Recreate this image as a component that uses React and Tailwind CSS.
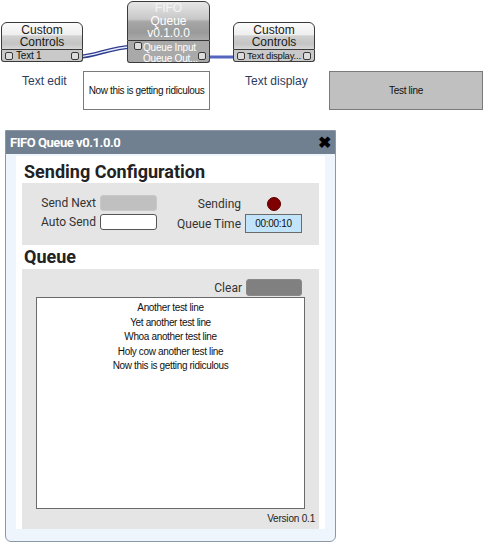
import React from 'react';

const pin = "w-[8px] h-[8px] rounded-[2px] border border-[#3a3a3a] bg-[#dcdcdc] shrink-0";

function Node({ className, head, headClass, children, stripClass }) {
    return (
        <div className={"absolute flex flex-col " + className}>
            <div className={"flex flex-col items-center justify-center border border-[#3a3a3a] rounded-t-[6px] leading-[12.5px] text-[12px] " + headClass}>
                {head}
            </div>
            <div className={"border border-t-0 border-[#3a3a3a] rounded-b-[3px] text-[10px] leading-[11px] whitespace-nowrap overflow-hidden tracking-[-0.2px] " + stripClass}>
                {children}
            </div>
        </div>
    );
}

export default function App() {
    const items = [
        'Another test line',
        'Yet another test line',
        'Whoa another test line',
        'Holy cow another test line',
        'Now this is getting ridiculous',
    ];

    return (
        <div className="w-[483px] h-[542px] bg-white overflow-hidden" style={{ fontFamily: '"Liberation Sans", Arial, sans-serif' }}>
            {/* canvas with nodes */}
            <div className="relative h-[130px]">
                <svg className="absolute left-0 top-0" width="483" height="130">
                    <path d="M78 57 C 96 56, 112 47, 132 47" fill="none" stroke="#2d3c8c" strokeWidth="4" />
                    <path d="M78 57 C 96 56, 112 47, 132 47" fill="none" stroke="#e8ecff" strokeWidth="1.3" />
                    <path d="M206 57 L 240 57" fill="none" stroke="#5565bd" strokeWidth="3" />
                </svg>

                <Node
                    className="left-[1px] top-[22px] w-[82px]"
                    headClass="h-[28px] text-[#1a1a1a] bg-[linear-gradient(#fbfbfb_0%,#eeeeee_45%,#d0d0d0_50%,#c4c4c4_80%,#d6d6d6_100%)]"
                    head={<><span>Custom</span><span>Controls</span></>}
                    stripClass="h-[12px] bg-[#c9c9c9] flex items-center justify-between px-[3px] text-[#111]"
                >
                    <div className="flex items-center gap-[3px]"><div className={pin} /><span>Text 1</span></div>
                    <div className={pin} />
                </Node>

                <Node
                    className="left-[127px] top-[1px] w-[83px]"
                    headClass="h-[40px] text-white bg-[linear-gradient(#e6e6e6_0%,#c8c8c8_45%,#a6a6a6_52%,#9a9a9a_80%,#ababab_100%)]"
                    head={<><span className="text-[#f4f4f4]">FIFO</span><span>Queue</span><span>v0.1.0.0</span></>}
                    stripClass="h-[22px] bg-[#a9a9a9] text-white relative text-[9.5px]"
                >
                    <div className="absolute left-[6px] top-[1px]"><div className={pin} /></div>
                    <div className="pl-[15px] pt-[1px]">Queue Input</div>
                    <div className="pl-[15px]">Queue Out...</div>
                    <div className="absolute right-[3px] top-[11px]"><div className={pin} /></div>
                </Node>

                <Node
                    className="left-[233px] top-[22px] w-[82px]"
                    headClass="h-[28px] text-[#1a1a1a] bg-[linear-gradient(#fbfbfb_0%,#eeeeee_45%,#d0d0d0_50%,#c4c4c4_80%,#d6d6d6_100%)]"
                    head={<><span>Custom</span><span>Controls</span></>}
                    stripClass="h-[12px] bg-[#c9c9c9] flex items-center justify-between px-[3px] text-[#111]"
                >
                    <div className="flex items-center gap-[2px] text-[9.5px]"><div className={pin} /><span>Text display...</span></div>
                    <div className={pin} />
                </Node>

                <div className="absolute left-[22px] top-[72px] text-[12px] text-[#2c3c62]">Text edit</div>
                <div className="absolute left-[245px] top-[72px] text-[12px] text-[#2c3c62]">Text display</div>

                <div className="absolute left-[83px] top-[71px] w-[127px] h-[39px] border border-[#7a7a7a] bg-white flex items-center justify-center text-[10px] tracking-[-0.35px] whitespace-nowrap text-[#111]">
                    Now this is getting ridiculous
                </div>
                <div className="absolute left-[329px] top-[71px] w-[154px] h-[39px] border border-[#7a7a7a] bg-[#c0c0c0] flex items-center justify-center text-[10px] tracking-[-0.3px] text-[#111]">
                    Test line
                </div>
            </div>

            {/* window */}
            <div className="ml-[5px] w-[331px] h-[412px] border border-[#8a98a6] rounded-b-[6px] bg-[#eef5fd] flex flex-col" style={{ fontFamily: 'Roboto, "Liberation Sans", sans-serif' }}>
                <div className="h-[23px] bg-[#708090] flex items-center justify-between pl-[4px] pr-[4px] shrink-0">
                    <span className="text-white font-bold text-[13px] tracking-[-0.45px]">FIFO Queue v0.1.0.0</span>
                    <span className="text-black text-[16px] font-bold leading-none">✖</span>
                </div>
                <div className="mx-[10px] mt-[2px] mb-[12px] flex-1 bg-white px-[6px] flex flex-col">
                    <div className="h-[27px] flex items-end pl-[2px] pb-[2px] text-[18px] font-bold text-[#222] leading-none whitespace-nowrap">Sending Configuration</div>
                    <div className="h-[62px] bg-[#e5e5e5] flex pt-[12px] text-[12px] text-[#333] whitespace-nowrap">
                        <div className="flex flex-col gap-[3px]">
                            <div className="flex items-center h-[16px]">
                                <span className="w-[78px] text-right pr-[4px]">Send Next</span>
                                <div className="w-[57px] h-[16px] rounded-[3px] bg-[#c0c0c0] border border-[#c8c8c8]" />
                            </div>
                            <div className="flex items-center h-[16px]">
                                <span className="w-[78px] text-right pr-[4px]">Auto Send</span>
                                <div className="w-[57px] h-[16px] rounded-[3px] bg-white border border-[#555]" />
                            </div>
                        </div>
                        <div className="flex flex-col gap-[2px] ml-[14px]">
                            <div className="flex items-center h-[17px]">
                                <span className="w-[74px] text-right pr-[4px]">Sending</span>
                                <div className="w-[57px] flex justify-center">
                                    <div className="w-[14px] h-[14px] rounded-full bg-[#800000] border border-[#5a0000]" />
                                </div>
                            </div>
                            <div className="flex items-center h-[19px]">
                                <span className="w-[74px] text-right pr-[4px]">Queue Time</span>
                                <div className="w-[57px] h-[19px] bg-[#c2e4fb] border border-[#6a6a6a] flex items-center justify-center text-[10px] tracking-[-0.3px] text-[#111]" style={{ fontFamily: '"Liberation Sans", sans-serif' }}>00:00:10</div>
                            </div>
                        </div>
                    </div>
                    <div className="h-[24px] flex items-end pl-[2px] pb-[3px] text-[18px] font-bold text-[#222] leading-none">Queue</div>
                    <div className="flex-1 bg-[#e5e5e5] flex flex-col px-[14px] pt-[10px] pb-[3px]">
                        <div className="flex justify-end items-center h-[17px] pr-[3px] text-[12px] text-[#333]">
                            <span className="pr-[4px]">Clear</span>
                            <div className="w-[56px] h-[17px] rounded-[3px] bg-[#808080] border border-[#888]" />
                        </div>
                        <div className="mt-[1px] h-[212px] border border-[#6a6a6a] bg-white pt-[3px] flex flex-col items-center text-[10px] tracking-[-0.35px] text-[#111] leading-[14.6px] whitespace-nowrap" style={{ fontFamily: '"Liberation Sans", sans-serif' }}>
                            {items.map((t) => <div key={t}>{t}</div>)}
                        </div>
                        <div className="mt-auto text-right text-[10px] tracking-[-0.2px] text-[#222] mr-[-10px]" style={{ fontFamily: '"Liberation Sans", sans-serif' }}>Version 0.1</div>
                    </div>
                </div>
            </div>
        </div>
    );
}
